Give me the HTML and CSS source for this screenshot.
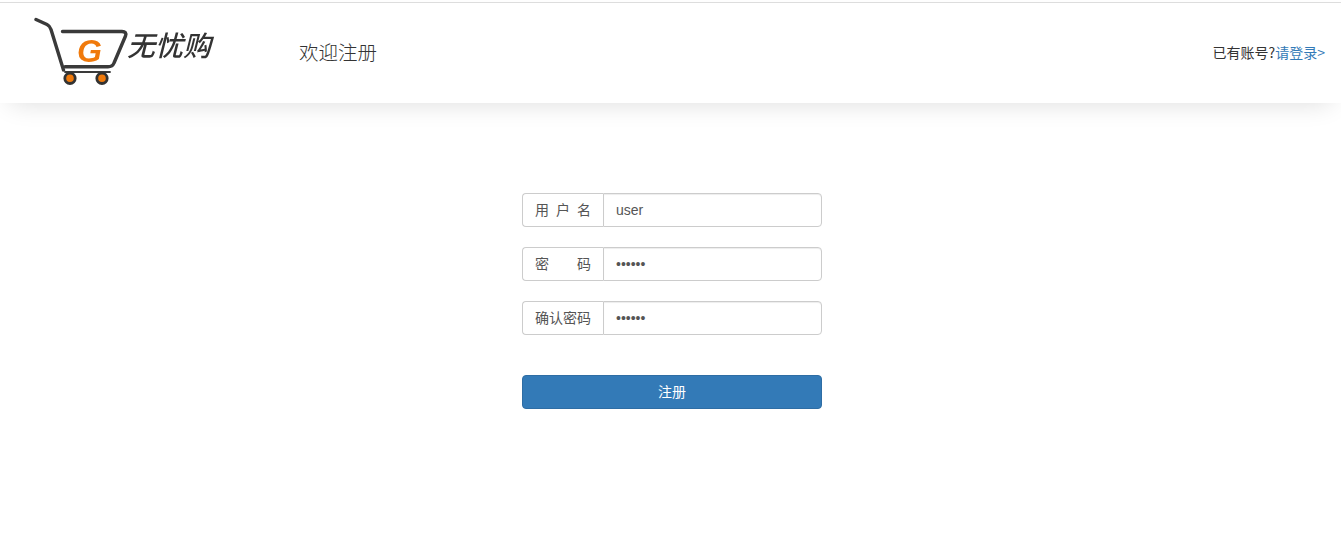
FILE: index.html

```html
<!DOCTYPE html>
<html lang="zh-CN">
<head>
  <meta charset="UTF-8" />
  <title>欢迎注册</title>
  <link rel="stylesheet" href="styles.css">
</head>
<body>
  <header class="top-bar">
    <div class="brand">
      <svg class="logo" width="240" height="100" viewBox="0 0 240 100">
        <g fill="none" stroke="#3a3a3a" stroke-linecap="round" stroke-linejoin="round">
          <path d="M36 16.500 L47 21.500 Q50 23 51 26.500 L63.500 67" stroke-width="3.400"/>
          <path d="M62.500 28.500 H122 Q127 28.500 125.500 33 L114 60 Q112.500 63.800 108 63.800 H65" stroke-width="3.400"/>
          <path d="M65 69 H110" stroke-width="1.800"/>
        </g>
        <circle cx="70" cy="75.300" r="5.200" fill="#f07a0c" stroke="#333" stroke-width="2.800"/>
        <circle cx="102" cy="75.300" r="5.200" fill="#f07a0c" stroke="#333" stroke-width="2.800"/>
        <text class="logo-g" x="77" y="59">G</text>
        <text class="logo-name" x="127" y="53">无忧购</text>
      </svg>
      <h1 class="welcome">欢迎注册</h1>
    </div>
    <p class="login-tip">已有账号?<a href="#">请登录&gt;</a></p>
  </header>

  <form class="register-form">
    <div class="input-group">
      <label class="addon" for="username">用户名</label>
      <input class="field" type="text" id="username" value="user">
    </div>
    <div class="input-group">
      <label class="addon" for="password">密码</label>
      <input class="field" type="password" id="password" value="123456">
    </div>
    <div class="input-group">
      <label class="addon" for="confirm">确认密码</label>
      <input class="field" type="password" id="confirm" value="123456">
    </div>
    <button class="submit-btn" type="button">注册</button>
  </form>
</body>
</html>
```

FILE: styles.css

```css
* {
  box-sizing: border-box;
}
body {
  margin: 0;
  background-color: #fff;
  color: #333;
  font-family: "Noto Sans CJK SC", "Noto Sans", sans-serif;
  font-size: 14px;
  height: 547px;
  overflow: hidden;
}
.top-bar {
  display: flex;
  justify-content: space-between;
  align-items: center;
  height: 101px;
  margin-top: 2px;
  border-top: 1px solid #ddd;
  background-color: #fff;
  box-shadow: 0 10px 24px -10px rgba(0, 0, 0, 0.14);
}
.brand {
  display: flex;
  align-items: center;
}
.logo {
  display: block;
  width: 240px;
  height: 100px;
  filter: blur(0.3px);
}
.logo-g {
  fill: #f07a0c;
  font-family: "Liberation Sans", sans-serif;
  font-size: 32px;
  font-style: italic;
  font-weight: bold;
}
.logo-name {
  fill: #333;
  font-family: "Noto Sans CJK SC", sans-serif;
  font-size: 28px;
  font-style: italic;
  font-weight: 500;
}
.welcome {
  margin: 0 0 2px 59px;
  font-size: 19.500px;
  font-weight: 300;
  line-height: 1;
}
.login-tip {
  margin: 0 16px 2px 0;
  font-size: 14px;
}
.login-tip a {
  color: #337ab7;
  text-decoration: none;
}
.register-form {
  width: 300px;
  margin: 90px 0 0 522px;
}
.input-group {
  display: flex;
  height: 34px;
  margin-bottom: 20px;
}
.addon {
  width: 81px;
  padding: 5px 12px 7px;
  border: 1px solid #ccc;
  border-right: 0;
  border-radius: 4px 0 0 4px;
  color: #555;
  line-height: 20px;
  text-align: justify;
  text-align-last: justify;
}
.field {
  flex: 1;
  min-width: 0;
  padding: 6px 12px;
  border: 1px solid #ccc;
  border-radius: 0 4px 4px 0;
  box-shadow: inset 0 1px 1px rgba(0, 0, 0, 0.075);
  color: #555;
  font-family: "Liberation Sans", sans-serif;
  font-size: 14px;
}
.submit-btn {
  display: block;
  width: 100%;
  height: 34px;
  margin-top: 40px;
  padding: 0 0 2px;
  border: 1px solid #2e6da4;
  border-radius: 4px;
  background-color: #337ab7;
  color: #fff;
  font-family: inherit;
  font-size: 14px;
}
```
